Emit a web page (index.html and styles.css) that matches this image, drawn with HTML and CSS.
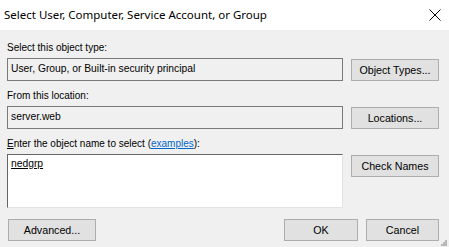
FILE: index.html
```html
<!DOCTYPE html>
<html>
<head>
    <title>Select User, Computer, Service Account, or Group</title>
    <link rel="stylesheet" href="styles.css">
</head>
<body>
    <div class="dialog">
        <div class="titlebar">
            <span class="title">Select User, Computer, Service Account, or Group</span>
            <svg class="close" width="12" height="12" viewBox="0 0 12 12">
                <path d="M0.5 0.5 L11.5 11.5 M11.5 0.5 L0.5 11.5" stroke="#000" stroke-width="1" fill="none"/>
            </svg>
        </div>

        <div class="content">
            <div class="label first">Select this object type:</div>
            <div class="row">
                <div class="field">User, Group, or Built-in security principal</div>
                <button class="btn">Object Types...</button>
            </div>

            <div class="label">From this location:</div>
            <div class="row">
                <div class="field">server.web</div>
                <button class="btn">Locations...</button>
            </div>

            <div class="label"><u>E</u>nter the object name to select (<a href="#" class="link">examples</a>):</div>
            <div class="row">
                <div class="names"><u>nedgrp</u></div>
                <button class="btn">Check Names</button>
            </div>

            <div class="footer">
                <button class="btn btn-wide">Advanced...</button>
                <div class="spacer"></div>
                <button class="btn btn-ok">OK</button>
                <button class="btn btn-cancel">Cancel</button>
            </div>
        </div>

        <div class="grip">
            <svg width="6" height="6" viewBox="0 0 6 6">
                <rect x="4" y="0" width="2" height="2" fill="#b8b8b8"/>
                <rect x="2" y="2" width="2" height="2" fill="#b8b8b8"/>
                <rect x="4" y="2" width="2" height="2" fill="#b8b8b8"/>
                <rect x="0" y="4" width="2" height="2" fill="#b8b8b8"/>
                <rect x="2" y="4" width="2" height="2" fill="#b8b8b8"/>
                <rect x="4" y="4" width="2" height="2" fill="#b8b8b8"/>
            </svg>
        </div>
    </div>
</body>
</html>
```

FILE: styles.css
```css
/* Base */
* {
    margin: 0;
    padding: 0;
    box-sizing: border-box;
}

body {
    font-family: "Liberation Sans", Arial, sans-serif;
    font-size: 10px;
    color: #000;
    background-color: #f0f0f0;
}

.dialog {
    width: 449px;
    height: 247px;
    position: relative;
    background-color: #f0f0f0;
    overflow: hidden;
}

/* Title bar */
.titlebar {
    height: 30px;
    background-color: #fff;
    display: flex;
    align-items: center;
    padding: 0 8px 0 4px;
}

.title {
    flex: 1;
    font-family: "Noto Sans", "Open Sans", sans-serif;
    font-size: 11.5px;
    padding-bottom: 1px;
}

.close {
    margin-bottom: 1px;
}

/* Content */
.content {
    padding: 0 10px 0 7px;
}

.label {
    height: 13px;
    line-height: 13px;
    font-size: 10px;
    margin-top: 8px;
    margin-bottom: 4px;
}

.label.first {
    margin-top: 11px;
}

.row {
    display: flex;
    align-items: flex-start;
}

.field {
    flex: 1;
    height: 23px;
    line-height: 20px;
    font-size: 10.3px;
    border: 1px solid #7a7a7a;
    background-color: #f0f0f0;
    padding-left: 3px;
    white-space: nowrap;
}

.names {
    flex: 1;
    height: 54px;
    border-top: 1px solid #646464;
    border-left: 1px solid #646464;
    border-right: 1px solid #e3e3e3;
    border-bottom: 1px solid #e3e3e3;
    background-color: #fff;
    padding: 2px 3px;
    line-height: 13px;
    font-size: 10.3px;
}

.link {
    color: #0066cc;
}

.btn {
    font-family: "Liberation Sans", Arial, sans-serif;
    font-size: 10.7px;
    color: #000;
    width: 88px;
    height: 22px;
    margin-left: 8px;
    margin-top: 1px;
    background-color: #e1e1e1;
    border: 1px solid #adadad;
}

/* Footer */
.footer {
    display: flex;
    margin-top: 11px;
}

.footer .btn {
    margin-top: 0;
}

.btn-wide {
    margin-left: 1px;
}

.spacer {
    flex: 1;
}

.btn-ok {
    width: 74px;
}

.btn-cancel {
    width: 73px;
}

.grip {
    position: absolute;
    right: 2px;
    bottom: 1px;
    line-height: 0;
}
```
